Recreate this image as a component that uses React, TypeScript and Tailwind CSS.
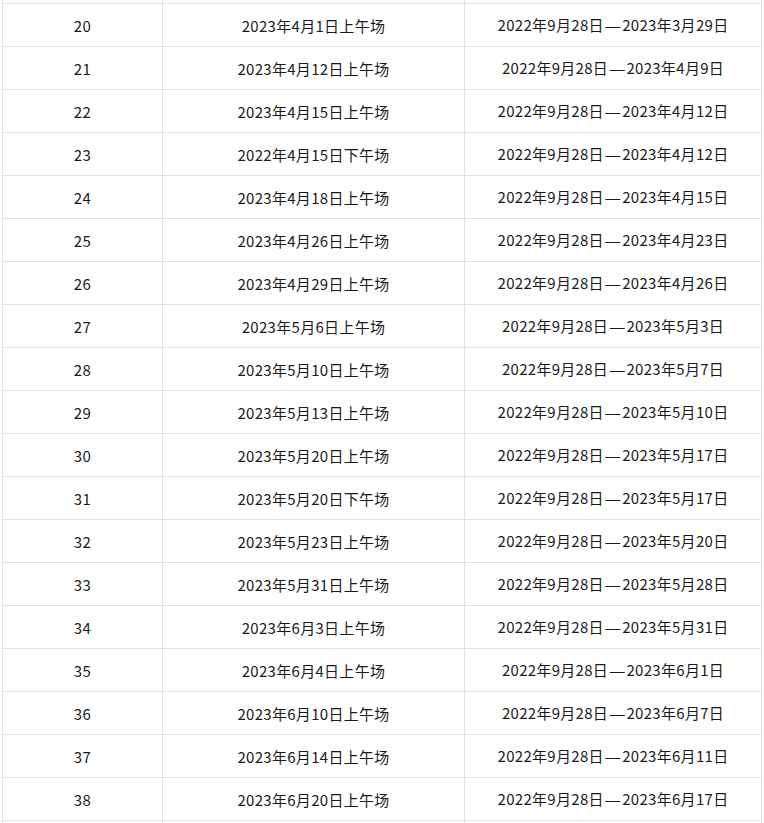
const rows: [string, string, string][] = [
  ["20", "2023年4月1日上午场", "2022年9月28日—2023年3月29日"],
  ["21", "2023年4月12日上午场", "2022年9月28日—2023年4月9日"],
  ["22", "2023年4月15日上午场", "2022年9月28日—2023年4月12日"],
  ["23", "2022年4月15日下午场", "2022年9月28日—2023年4月12日"],
  ["24", "2023年4月18日上午场", "2022年9月28日—2023年4月15日"],
  ["25", "2023年4月26日上午场", "2022年9月28日—2023年4月23日"],
  ["26", "2023年4月29日上午场", "2022年9月28日—2023年4月26日"],
  ["27", "2023年5月6日上午场", "2022年9月28日—2023年5月3日"],
  ["28", "2023年5月10日上午场", "2022年9月28日—2023年5月7日"],
  ["29", "2023年5月13日上午场", "2022年9月28日—2023年5月10日"],
  ["30", "2023年5月20日上午场", "2022年9月28日—2023年5月17日"],
  ["31", "2023年5月20日下午场", "2022年9月28日—2023年5月17日"],
  ["32", "2023年5月23日上午场", "2022年9月28日—2023年5月20日"],
  ["33", "2023年5月31日上午场", "2022年9月28日—2023年5月28日"],
  ["34", "2023年6月3日上午场", "2022年9月28日—2023年5月31日"],
  ["35", "2023年6月4日上午场", "2022年9月28日—2023年6月1日"],
  ["36", "2023年6月10日上午场", "2022年9月28日—2023年6月7日"],
  ["37", "2023年6月14日上午场", "2022年9月28日—2023年6月11日"],
  ["38", "2023年6月20日上午场", "2022年9月28日—2023年6月17日"],
];

const cols = "grid grid-cols-[160px_302px_298px]";
const cell = "border-l border-[#e0e0e0] flex items-center justify-center pt-[2px]";

export default function App() {
  return (
    <div className="min-h-screen bg-white font-['Noto_Sans_CJK_SC','Noto_Sans',sans-serif] text-[15px] tracking-[0.3px] text-[#1a1a1a]">
      <div className="ml-[2px] w-[760px]">
        {/* tail of the previous row */}
        <div className={`${cols} h-[3px]`}>
          <div className="border-l border-[#e0e0e0]"></div>
          <div className="border-l border-[#e0e0e0]"></div>
          <div className="border-x border-[#e0e0e0]"></div>
        </div>

        {rows.map(([no, exam, period]) => {
          const [from, to] = period.split("—");
          return (
            <div key={no} className={`${cols} h-[43px] border-t border-[#e0e0e0]`}>
              <div className={cell}>{no}</div>
              <div className={cell}>{exam}</div>
              <div className={`${cell} border-r`}>
                <span>
                  {from}
                  <span className="font-['Liberation_Sans',sans-serif] px-[1.5px]">—</span>
                  {to}
                </span>
              </div>
            </div>
          );
        })}

        {/* start of the next row */}
        <div className={`${cols} h-[3px] border-t border-[#e0e0e0]`}>
          <div className="border-l border-[#e0e0e0]"></div>
          <div className="border-l border-[#e0e0e0]"></div>
          <div className="border-x border-[#e0e0e0]"></div>
        </div>
      </div>
    </div>
  );
}
